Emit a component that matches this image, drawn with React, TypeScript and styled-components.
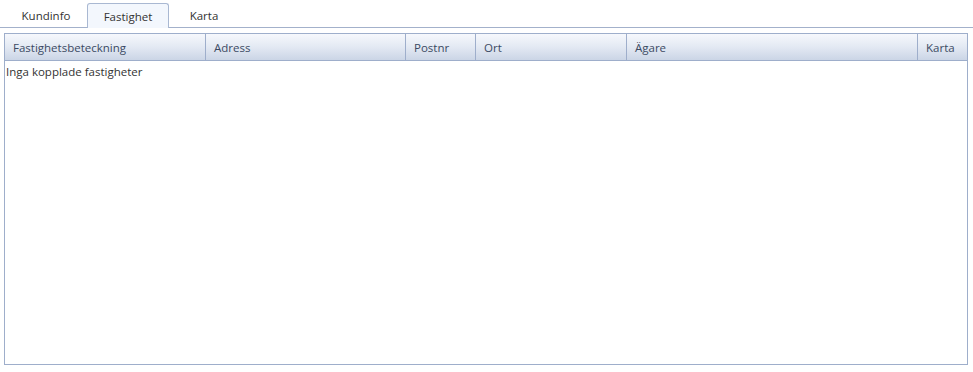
import React from "react";
import styled, { createGlobalStyle } from "styled-components";

const Global = createGlobalStyle`
  html, body { margin: 0; padding: 0; background: #fff; }
  body { font-family: "Segoe UI", "Open Sans", "Noto Sans", sans-serif; font-size: 11.5px; color: #333; }
`;

const Page = styled.div`
  width: 973px;
  height: 372px;
  display: flex;
  flex-direction: column;
  box-sizing: border-box;
  padding-top: 3px;
`;

const TabBar = styled.div`
  display: flex;
  height: 25px;
  border-bottom: 1px solid #a3b1cb;
  padding-left: 5px;
  box-sizing: border-box;
`;

const Tab = styled.div<{ $active?: boolean; $w: number }>`
  height: ${(p) => (p.$active ? "25px" : "24px")};
  width: ${(p) => p.$w}px;
  box-sizing: border-box;
  display: flex;
  align-items: center;
  justify-content: center;
  font-size: 11.5px;
  color: #333;
  cursor: pointer;
  border: 1px solid ${(p) => (p.$active ? "#a9b8d2" : "transparent")};
  border-bottom: none;
  border-radius: 3px 3px 0 0;
  background: ${(p) => (p.$active ? "#f3f7fd" : "transparent")};
  margin-bottom: ${(p) => (p.$active ? "-1px" : "0")};
`;

const Grid = styled.div`
  margin: 5px 5px 7px 4px;
  flex: 1;
  border: 1px solid #9eaecb;
  display: flex;
  flex-direction: column;
  background: #fff;
`;

const HeaderRow = styled.div`
  display: grid;
  grid-template-columns: 201px 200px 70px 151px 291px 1fr;
  height: 26px;
  background: linear-gradient(to bottom, #f6f8fc 0%, #e3e9f3 50%, #cbd5e6 100%);
  border-bottom: 1px solid #9eaecb;
`;

const HeaderCell = styled.div<{ $last?: boolean }>`
  display: flex;
  align-items: center;
  padding-left: 8px;
  font-size: 11.5px;
  color: #3b4a63;
  border-right: ${(p) => (p.$last ? "none" : "1px solid #9eaecb")};
  white-space: nowrap;
  overflow: hidden;
`;

const Empty = styled.div`
  padding: 3px 0 0 1px;
  font-size: 11.5px;
  color: #333;
`;

const cols = ["Fastighetsbeteckning", "Adress", "Postnr", "Ort", "Ägare", "Karta"];

export default function App() {
  return (
    <>
      <Global />
      <Page>
        <TabBar>
          <Tab $w={82}>Kundinfo</Tab>
          <Tab $active $w={82}>Fastighet</Tab>
          <Tab $w={70}>Karta</Tab>
        </TabBar>
        <Grid>
          <HeaderRow>
            {cols.map((c, i) => (
              <HeaderCell key={c} $last={i === cols.length - 1}>{c}</HeaderCell>
            ))}
          </HeaderRow>
          <Empty>Inga kopplade fastigheter</Empty>
        </Grid>
      </Page>
    </>
  );
}
